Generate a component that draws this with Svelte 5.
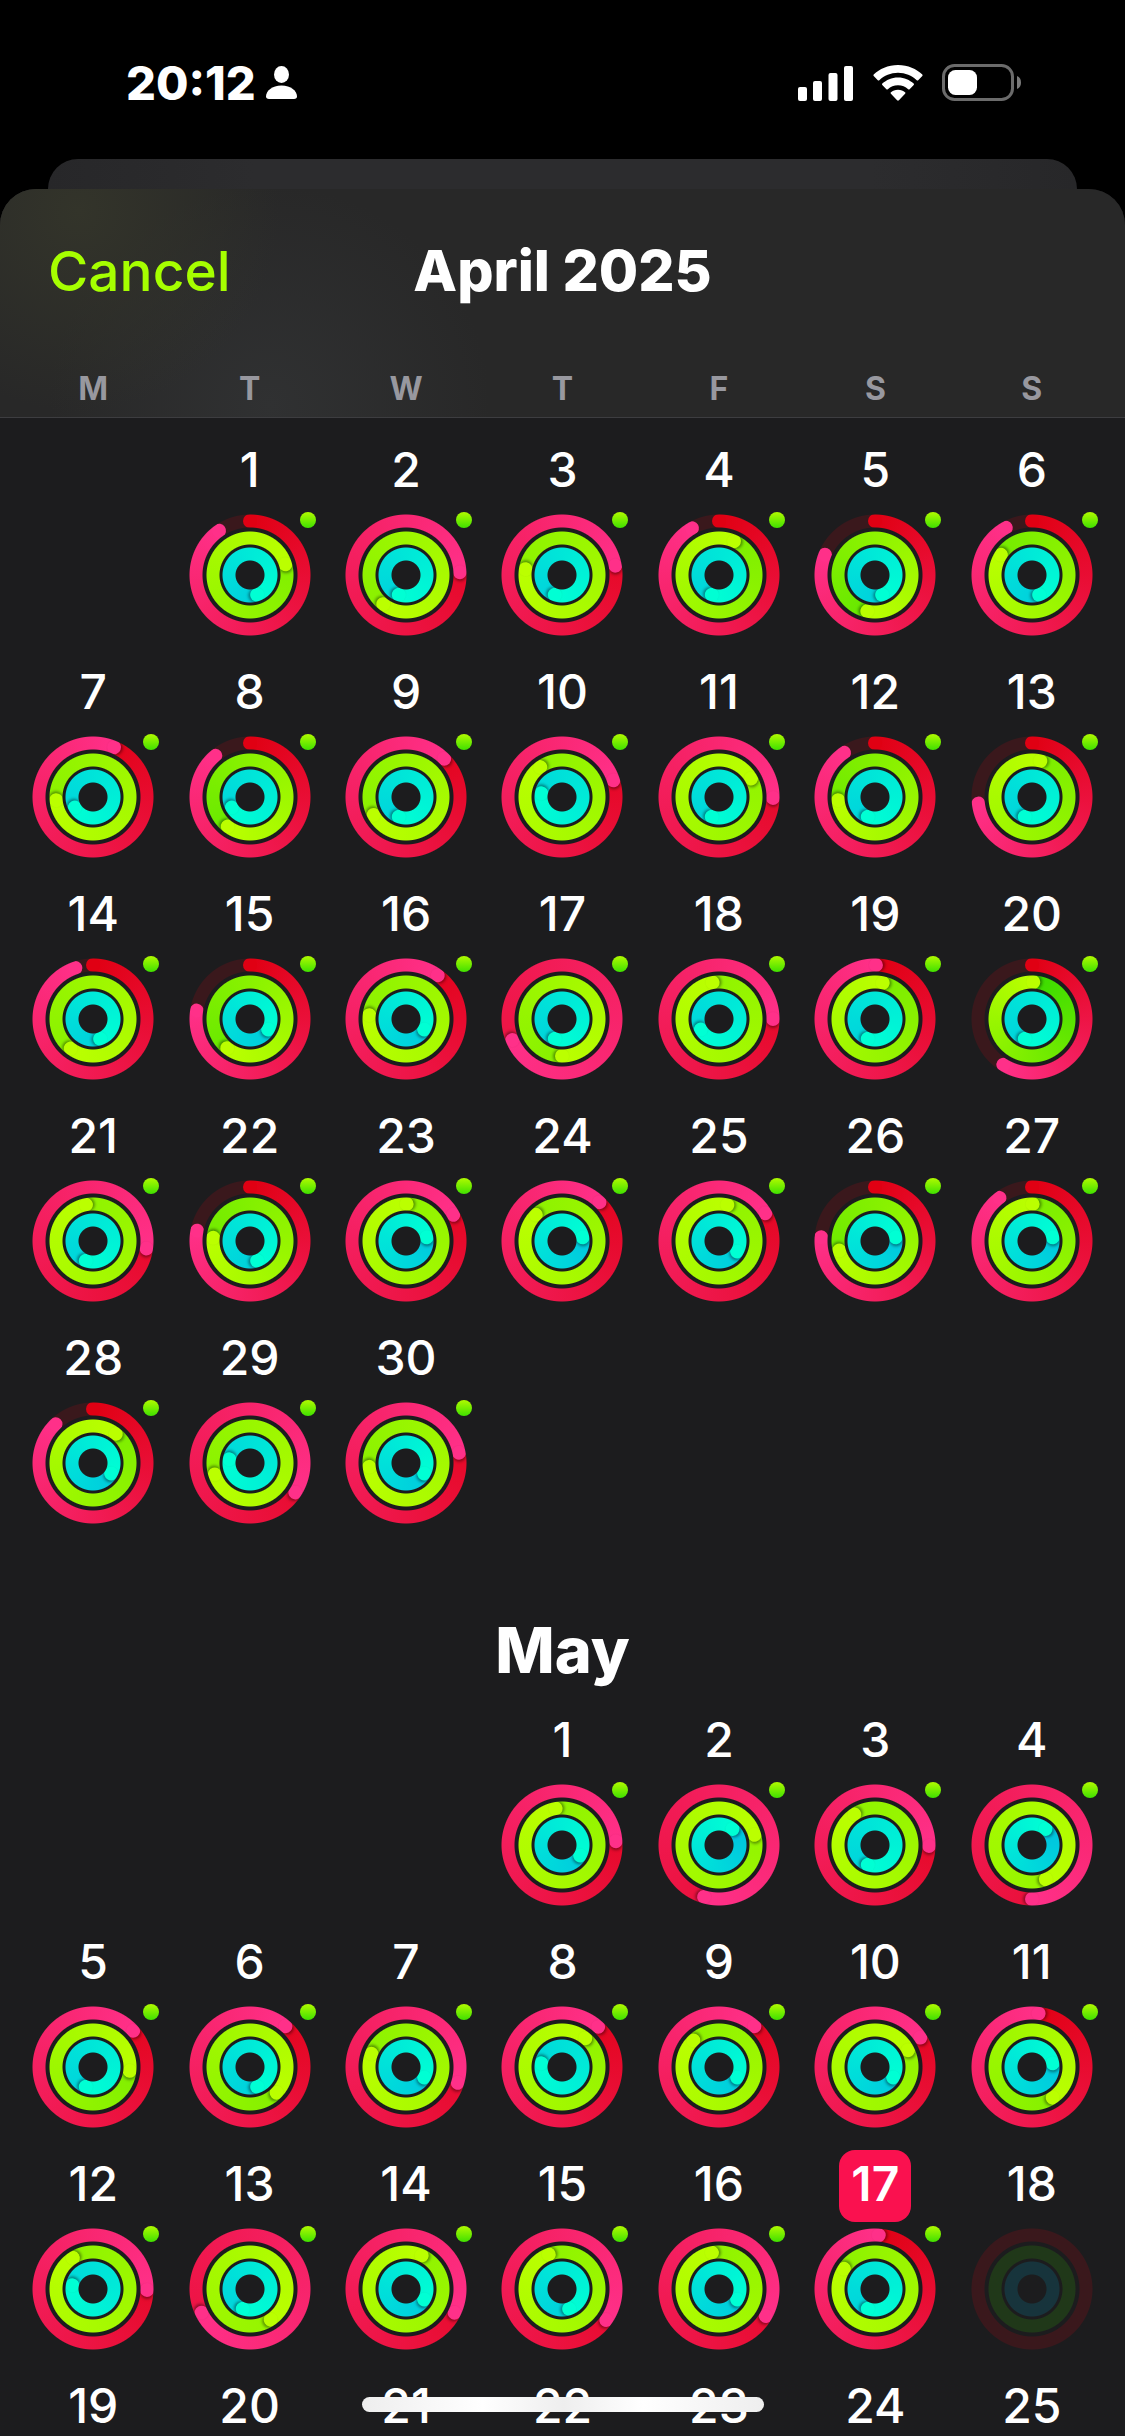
<script>
  // Ring colours run from the first to the second as a ring advances.
  const PALETTE = {
    move: [[224, 0, 19], [255, 48, 137]],
    exercise: [[56, 219, 0], [187, 255, 0]],
    stand: [[0, 186, 225], [0, 255, 212]],
  };
  const NAMES = ['move', 'exercise', 'stand'];
  const weekdays = ['M', 'T', 'W', 'T', 'F', 'S', 'S'];

  // Progress per day in degrees swept: [move, exercise, stand].
  const months = [
    {
      name: 'April',
      title: '',
      offset: 1,
      shown: 30,
      today: 0,
      days: [
        [325, 793, 520], [447, 938, 560], [440, 999, 560], [330, 744, 560], [292, 552, 520], [331, 663, 520],
        [383, 985, 600], [320, 577, 600], [405, 961, 560], [432, 1044, 640], [451, 1140, 560], [325, 625, 560], [263, 733, 560],
        [341, 937, 520], [279, 578, 480], [396, 996, 480], [607, 900, 560], [450, 1070, 600], [361, 732, 560], [212, 362, 560],
        [458, 1069, 560], [281, 635, 520], [421, 1081, 440], [404, 1035, 440], [419, 1093, 480], [274, 615, 440], [323, 721, 440],
        [316, 758, 480], [483, 972, 640], [439, 984, 480],
      ],
    },
    {
      name: 'May',
      title: 'May',
      offset: 3,
      shown: 25,
      today: 17,
      days: [
        [446, 1070, 480], [556, 1154, 400], [451, 1046, 560], [540, 1238, 400],
        [408, 816, 560], [401, 854, 520], [467, 1011, 480], [402, 1119, 640], [401, 1036, 480], [417, 1143, 480], [367, 866, 440],
        [451, 1047, 640], [604, 1226, 560], [476, 1105, 480], [485, 1059, 520], [480, 1069, 480], [364, 1023, 560],
      ],
    },
  ];

  function mix(name, amount) {
    const [from, to] = PALETTE[name];
    return `rgb(${from.map((c, i) => Math.round(c + (to[i] - c) * amount)).join(' ')})`;
  }

  function ringStyle(name, sweep) {
    const head = mix(name, 1);
    if (sweep >= 360) {
      const tail = mix(name, (sweep - 360) / sweep);
      return `--head:${head};--end:${sweep % 360}deg;background-image:conic-gradient(from ${sweep % 360}deg, ${tail}, ${head})`;
    }
    return `--head:${head};--end:${sweep}deg;background-image:conic-gradient(${mix(name, 0)}, ${head} ${sweep}deg, transparent ${sweep}deg)`;
  }
</script>

<div class="phone">
  <header class="status">
    <div class="clock">
      <span>20:12</span>
      <svg width="31" height="34" viewBox="0 0 31 34" aria-hidden="true">
        <ellipse cx="15.500" cy="8.500" rx="7.500" ry="8.500" fill="#fff" />
        <path d="M3 33C1 33 0 32 0 30.500C0 25 6 19.500 15.500 19.500S31 25 31 30.500C31 32 30 33 28 33Z" fill="#fff" />
      </svg>
    </div>
    <div class="signals">
      <svg width="56" height="36" viewBox="0 0 56 36" aria-hidden="true" fill="#fff">
        <rect x="0" y="22" width="9" height="14" rx="2" />
        <rect x="15" y="16" width="9" height="20" rx="2" />
        <rect x="30.500" y="8" width="9" height="28" rx="2" />
        <rect x="46" y="1" width="9" height="35" rx="2" />
      </svg>
      <svg width="50" height="36" viewBox="0 0 50 36" aria-hidden="true" fill="#fff">
        <path d="M25 0C35 0 43.500 4 49.300 9.600Q50 10.400 49.300 11.100L45.200 15.200Q44.500 15.900 43.700 15.200C38.800 10.600 32.300 7.800 25 7.800S11.200 10.600 6.300 15.200Q5.500 15.900 4.800 15.200L.7 11.100Q0 10.400.7 9.600C6.500 4 15 0 25 0Z" />
        <path d="M25 12.500C31.500 12.500 36.600 15 40.700 18.600Q41.400 19.400 40.700 20.100L36.600 24.200Q35.900 24.800 35.200 24.200C32.400 21.800 29.100 20.300 25 20.300S17.600 21.800 14.800 24.200Q14.100 24.800 13.400 24.200L9.300 20.100Q8.600 19.400 9.300 18.600C13.400 15 18.500 12.500 25 12.500Z" />
        <path d="M25 24.800C28 24.800 30.300 25.900 32 27.300Q32.800 28 32.100 28.700L25.900 35.300Q25 36.200 24.100 35.300L17.900 28.700Q17.200 28 18 27.300C19.700 25.900 22 24.800 25 24.800Z" />
      </svg>
      <svg width="80" height="38" viewBox="0 0 80 38" aria-hidden="true">
        <rect x="1.500" y="1.500" width="69" height="34" rx="11" fill="none" stroke="#6b6b6b" stroke-width="3" />
        <rect x="6" y="6" width="29" height="25" rx="7.500" fill="#fff" />
        <path d="M75 12C77.800 13 79 15.500 79 18.500S77.800 24 75 25Z" fill="#7a7a7a" />
      </svg>
    </div>
  </header>

  <div class="behind"></div>

  <main class="sheet">
    <div class="top">
      <div class="bar">
        <button class="cancel" type="button">Cancel</button>
        <h1>April 2025</h1>
      </div>
      <div class="week">
        {#each weekdays as day}
          <span>{day}</span>
        {/each}
      </div>
    </div>

    <div class="scroll">
      {#each months as month}
        <section aria-label={month.name}>
          {#if month.title}
            <h2>{month.title}</h2>
          {/if}
          <div class="grid">
            {#each Array(month.offset) as _}
              <span></span>
            {/each}
            {#each Array(month.shown) as _, i}
              {@const progress = month.days[i]}
              <button class="day" type="button">
                <span class="number" class:today={month.today === i + 1}>{i + 1}</span>
                <span class="rings">
                  {#each NAMES as name, r}
                    <span class="track {name}">
                      {#if progress}
                        <span class="fill" style={ringStyle(name, progress[r])}>
                          {#if progress[r] < 360}
                            <span class="start"></span>
                          {/if}
                          <span class="end" class:over={progress[r] >= 360}></span>
                        </span>
                      {/if}
                    </span>
                  {/each}
                  {#if progress}
                    <span class="dot"></span>
                  {/if}
                </span>
              </button>
            {/each}
          </div>
        </section>
      {/each}
    </div>
  </main>

  <div class="home"></div>
</div>

<style>
  :global(body) {
    margin: 0;
    background: #000;
  }

  .phone {
    position: relative;
    display: flex;
    flex-direction: column;
    height: 100vh;
    overflow: hidden;
    background: #000;
    color: #fff;
    font-family: Inter, "Liberation Sans", sans-serif;
  }

  button {
    margin: 0;
    padding: 0;
    border: 0;
    background: none;
    color: inherit;
    font: inherit;
    cursor: pointer;
  }

  .status {
    display: flex;
    flex: none;
    align-items: center;
    justify-content: space-between;
    padding: 59px 103px 52px 126px;
  }

  .clock,
  .signals {
    display: flex;
    align-items: center;
  }

  .clock {
    gap: 10px;
    font-size: 47px;
    font-weight: 800;
    line-height: 48px;
  }

  .signals {
    gap: 19px;
  }

  .behind {
    flex: none;
    height: 30px;
    margin: 0 48px;
    border-radius: 30px 30px 0 0;
    background: linear-gradient(90deg, #272729, #2c2c2e 20%, #2c2c2e 80%, #272729);
  }

  .sheet {
    display: flex;
    flex: 1;
    flex-direction: column;
    min-height: 0;
    overflow: hidden;
    border-radius: 36px 36px 0 0;
    background: #1c1c1e;
  }

  .top {
    flex: none;
    border-bottom: 1px solid #3d3d40;
    background:
      radial-gradient(circle at 7% 10%, #33342a, #33342a00 200px),
      radial-gradient(circle at 24% 95%, #303132, #30313200 220px),
      #282828;
  }

  .bar {
    display: grid;
    grid-template-columns: 1fr auto 1fr;
    align-items: center;
    padding: 48px 48px 64px;
    line-height: 68px;
  }

  .cancel {
    justify-self: start;
    color: #a6ff00;
    font-size: 55px;
    font-weight: 500;
  }

  h1 {
    margin: 0;
    font-size: 57px;
    font-weight: 800;
    line-height: 68px;
  }

  .week,
  .grid {
    display: grid;
    grid-template-columns: repeat(7, 1fr);
    padding: 0 15px;
  }

  .week {
    padding-bottom: 8px;
    color: #98989f;
    font-size: 32px;
    font-weight: 700;
    line-height: 40px;
    text-align: center;
  }

  .scroll {
    flex: 1;
    min-height: 0;
    padding-top: 18px;
    overflow-y: auto;
    scrollbar-width: none;
  }

  h2 {
    margin: 0;
    padding: 64px 0 16px;
    font-size: 63px;
    font-weight: 800;
    line-height: 80px;
    text-align: center;
  }

  .day {
    display: flex;
    flex-direction: column;
    align-items: center;
    gap: 6px;
    padding-bottom: 22px;
  }

  .number {
    min-width: 72px;
    padding-bottom: 4px;
    border-radius: 16px;
    font-size: 48px;
    font-weight: 500;
    line-height: 68px;
    text-align: center;
  }

  .today {
    background: #fa114f;
    font-weight: 600;
  }

  .rings {
    position: relative;
    display: grid;
    place-items: center;
    width: 122px;
    height: 122px;
  }

  .track {
    display: grid;
    grid-area: 1 / 1;
    mask-image: radial-gradient(
      closest-side,
      transparent calc(100% - 14px),
      #000 calc(100% - 13px),
      #000 calc(100% - 1px),
      transparent 100%
    );
  }

  .move {
    width: 122px;
    height: 122px;
    background: #3a181c;
  }

  .exercise {
    width: 88px;
    height: 88px;
    background: #203819;
  }

  .stand {
    width: 56px;
    height: 56px;
    background: #17343c;
  }

  .fill {
    position: relative;
  }

  .start,
  .end {
    position: absolute;
    inset: 0;
    display: flex;
    align-items: flex-start;
    justify-content: center;
  }

  .end {
    transform: rotate(var(--end));
  }

  .start::before,
  .end::before {
    width: 14px;
    height: 14px;
    border-radius: 50%;
    background: var(--head);
    content: "";
  }

  .start::before {
    background: #e00013;
  }

  .over::before {
    box-shadow: 2px 0 3px rgb(0 0 0 / 40%);
  }

  .dot {
    position: absolute;
    top: -2px;
    right: -5px;
    width: 16px;
    height: 16px;
    border-radius: 50%;
    background: linear-gradient(#b0fa00, #3fe000);
  }

  .home {
    position: absolute;
    bottom: 24px;
    left: 50%;
    width: 402px;
    height: 15px;
    margin-left: -201px;
    border-radius: 8px;
    background: linear-gradient(90deg, #eee, #fff 30%, #eee 50%, #fff 70%, #eee);
  }
</style>
